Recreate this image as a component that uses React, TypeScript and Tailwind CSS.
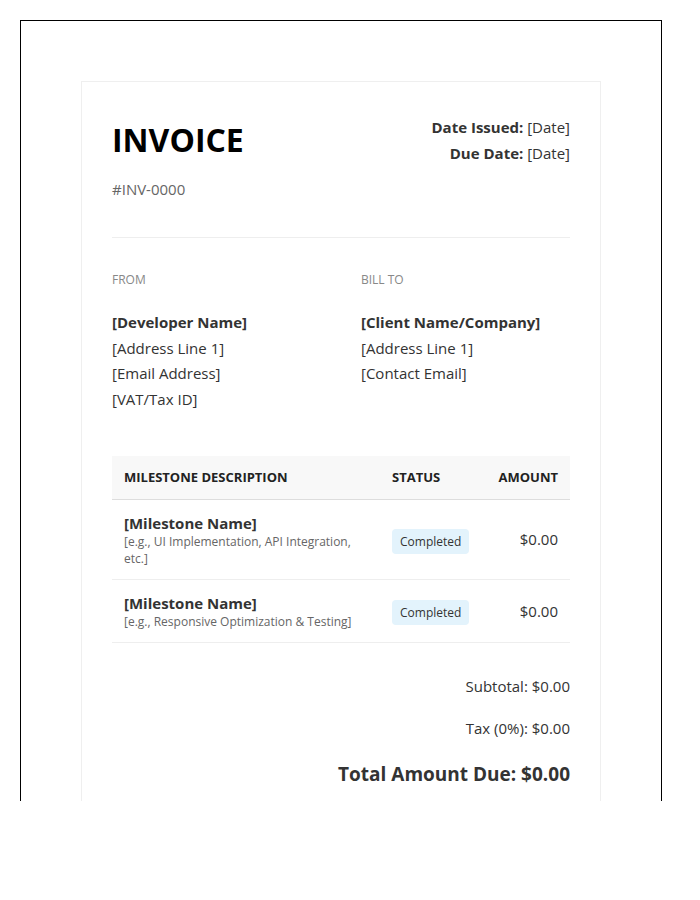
export default function App() {
  const f = { fontFamily: '"Open Sans", "Noto Sans", sans-serif' };
  return (
    <div className="bg-white w-[700px] h-[900px] pt-5 pl-5" style={f}>
      <div className="w-[642px] h-[781px] border border-b-0 border-black overflow-hidden pt-[60px] pl-[60px]">
        <div className="w-[520px] border border-[#efefef] px-[30px] pt-[30px] pb-10 text-[#333]">
          <div className="flex justify-between items-start">
            <div>
              <h1 className="text-[32px] font-bold text-black leading-[58px] mt-[-1px]">INVOICE</h1>
              <div className="text-[15px] text-[#666] mt-[8px] leading-[24px]">#INV-0000</div>
            </div>
            <div className="text-right text-[15px] leading-[26px] mt-[2px]">
              <div><b>Date Issued:</b> [Date]</div>
              <div><b>Due Date:</b> [Date]</div>
            </div>
          </div>
          <div className="h-px bg-[#eeeeee] mt-[36px]" />
          <div className="flex mt-[34px]">
            <div className="w-[249px]">
              <div className="text-[12px] text-[#888] leading-[16px] mb-[22px]">FROM</div>
              <div className="text-[15px] leading-[25.5px]">
                <div className="font-bold">[Developer Name]</div>
                <div>[Address Line 1]</div>
                <div>[Email Address]</div>
                <div>[VAT/Tax ID]</div>
              </div>
            </div>
            <div>
              <div className="text-[12px] text-[#888] leading-[16px] mb-[22px]">BILL TO</div>
              <div className="text-[15px] leading-[25.5px]">
                <div className="font-bold">[Client Name/Company]</div>
                <div>[Address Line 1]</div>
                <div>[Contact Email]</div>
              </div>
            </div>
          </div>
          <div className="mt-[44px]">
            <div className="flex items-center h-[44px] bg-[#f8f8f8] border-b border-[#ddd] text-[13px] font-bold text-[#222] px-3">
              <div className="flex-1">MILESTONE DESCRIPTION</div>
              <div className="w-[98px]">STATUS</div>
              <div className="w-[68px] text-right">AMOUNT</div>
            </div>
            <div className="flex items-center h-[80px] border-b border-[#eee] px-3">
              <div className="flex-1">
                <div className="text-[15px] font-bold leading-[20px]">[Milestone Name]</div>
                <div className="text-[12px] text-[#666] leading-[17px] w-[250px]">[e.g., UI Implementation, API Integration, etc.]</div>
              </div>
              <div className="w-[98px]"><span className="bg-[#e3f3fc] text-[12px] rounded px-2 py-[4px]">Completed</span></div>
              <div className="w-[68px] text-right text-[15px]">$0.00</div>
            </div>
            <div className="flex items-center h-[63px] border-b border-[#eee] px-3">
              <div className="flex-1">
                <div className="text-[15px] font-bold leading-[20px]">[Milestone Name]</div>
                <div className="text-[12px] text-[#666] leading-[17px]">[e.g., Responsive Optimization &amp; Testing]</div>
              </div>
              <div className="w-[98px]"><span className="bg-[#e3f3fc] text-[12px] rounded px-2 py-[4px]">Completed</span></div>
              <div className="w-[68px] text-right text-[15px]">$0.00</div>
            </div>
          </div>
          <div className="text-right text-[15px] mt-[32px] leading-[22px]">
            <div>Subtotal: $0.00</div>
            <div className="mt-[20px]">Tax (0%): $0.00</div>
            <div className="mt-[24px] text-[19px] font-bold">Total Amount Due: $0.00</div>
          </div>
        </div>
      </div>
    </div>
  );
}
